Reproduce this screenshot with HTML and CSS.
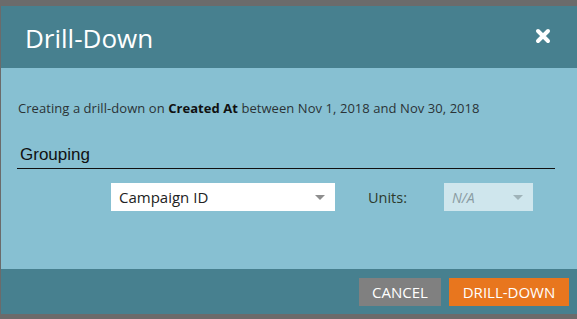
FILE: index.html
```html
<!DOCTYPE html>
<html lang="en">
<head>
    <meta charset="UTF-8">
    <title>Drill-Down</title>
    <link rel="stylesheet" href="styles.css">
</head>
<body>
    <div class="dialog">
        <!-- Title bar -->
        <div class="dialog-header">
            <h1>Drill-Down</h1>
            <span class="close-button">
                <svg width="16" height="16" viewBox="0 0 16 16">
                    <path d="M3 3 L13 13 M13 3 L3 13" stroke="#ffffff" stroke-width="4" stroke-linecap="round"/>
                </svg>
            </span>
        </div>

        <div class="dialog-body">
            <p class="intro">Creating a drill-down on <b>Created At</b> between Nov 1, 2018 and Nov 30, 2018</p>

            <div class="section-title">Grouping</div>

            <div class="field-row">
                <div class="select">
                    <span>Campaign ID</span>
                    <span class="arrow"></span>
                </div>
                <label class="units-label">Units:</label>
                <div class="select disabled">
                    <span>N/A</span>
                    <span class="arrow"></span>
                </div>
            </div>
        </div>

        <div class="dialog-footer">
            <button class="btn btn-cancel">CANCEL</button>
            <button class="btn btn-primary">DRILL-DOWN</button>
        </div>
    </div>
</body>
</html>
```

FILE: styles.css
```css
* {
    margin: 0;
    padding: 0;
    box-sizing: border-box;
}
body {
    font-family: "Open Sans", Arial, sans-serif;
    background-color: #6b6b6b;
    height: 100vh;
    overflow: hidden;
}
.dialog {
    margin: 6px 0 0 1px;
    width: 576px;
}
.dialog-header {
    height: 62px;
    background-color: #47808f;
    display: flex;
    align-items: center;
    justify-content: space-between;
    padding: 2px 26px 0 24px;
}
.dialog-header h1 {
    font-size: 26px;
    font-weight: normal;
    color: #ffffff;
    line-height: 36px;
}
.close-button {
    display: flex;
    margin-top: -4px;
}
.dialog-body {
    height: 201px;
    background-color: #87c0d2;
    padding-top: 31px;
}
.intro {
    font-size: 13px;
    line-height: 18px;
    letter-spacing: 0.06px;
    color: #2b3336;
    padding-left: 17px;
}
.intro b {
    color: #111;
}
.section-title {
    font-family: "Liberation Sans", Arial, sans-serif;
    font-size: 17px;
    line-height: 20px;
    color: #111;
    margin: 28px 0 0 16px;
    width: 538px;
    padding: 0 0 3px 3px;
    border-bottom: 1px solid #111;
}
.field-row {
    display: flex;
    align-items: center;
    margin-top: 14px;
    padding-left: 110px;
}
.select {
    flex-shrink: 0;
    width: 224px;
    height: 28px;
    background-color: #ffffff;
    display: flex;
    align-items: center;
    justify-content: space-between;
    padding: 0 10px 0 8px;
    font-size: 15px;
    color: #222;
}
.select.disabled {
    width: 89px;
    background-color: #cfe6ed;
    color: #8a9ca2;
    font-size: 14px;
    font-style: italic;
}
.arrow {
    width: 0;
    height: 0;
    border-left: 5px solid transparent;
    border-right: 5px solid transparent;
    border-top: 5px solid #8e8e8e;
}
.select.disabled .arrow {
    border-top-color: #9fb3b9;
}
.units-label {
    flex-shrink: 0;
    width: 109px;
    padding-left: 33px;
    font-size: 14.5px;
    color: #2d3a2c;
}
.dialog-footer {
    height: 45px;
    background-color: #47808f;
    display: flex;
    justify-content: flex-end;
    padding: 9px 8px 0 0;
    gap: 8px;
}
.btn {
    height: 28px;
    border: none;
    font-family: "Open Sans", Arial, sans-serif;
    font-size: 15px;
    color: #ffffff;
    cursor: pointer;
}
.btn-cancel {
    width: 82px;
    background-color: #808080;
}
.btn-primary {
    width: 120px;
    background-color: #e8761e;
}
```
